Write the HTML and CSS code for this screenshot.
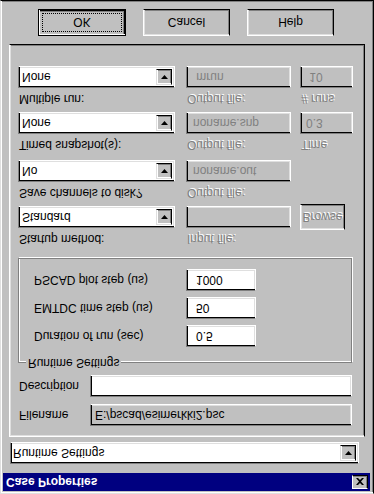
FILE: index.html
```html
<!DOCTYPE html>
<html lang="en">
<head>
    <meta charset="UTF-8">
    <meta name="viewport" content="width=device-width, initial-scale=1.0">
    <title>Case Properties</title>
    <link rel="stylesheet" href="styles.css">
</head>
<body>
    <div class="window">
        <div class="titlebar">
            <span class="title">Case Properties</span>
            <span class="close-btn">
                <svg width="8" height="7" viewBox="0 0 8 7"><path d="M0 0h2l2 2 2-2h2L5 3.5 8 7H6L4 5 2 7H0l3-3.5z" fill="#000"/></svg>
            </span>
        </div>

        <div class="combo tab-select">
            <span class="combo-text">Runtime Settings</span>
            <span class="arrow-btn"><svg width="7" height="4" viewBox="0 0 7 4"><path d="M0 0h7L3.5 4z" fill="#000"/></svg></span>
        </div>

        <div class="sheet">
            <div class="line-row">
                <span class="line-label">Filename</span>
                <div class="field readonly wide">E:/pscad/esimerkki2.psc</div>
            </div>
            <div class="line-row">
                <span class="line-label">Description</span>
                <div class="field wide"></div>
            </div>

            <fieldset class="group">
                <legend>Runtime Settings</legend>
                <div class="group-grid">
                    <span class="group-label">Duration of run (sec)</span>
                    <div class="field num">0.5</div>
                    <span class="group-label">EMTDC time step (us)</span>
                    <div class="field num">50</div>
                    <span class="group-label">PSCAD plot step (us)</span>
                    <div class="field num">1000</div>
                </div>
            </fieldset>

            <div class="opt-row first">
                <span class="lbl">Startup method:</span>
                <span class="lbl disabled">Input file:</span>
                <span></span>
                <div class="combo">
                    <span class="combo-text">Standard</span>
                    <span class="arrow-btn"><svg width="7" height="4" viewBox="0 0 7 4"><path d="M0 0h7L3.5 4z" fill="#000"/></svg></span>
                </div>
                <div class="field off"></div>
                <span class="btn browse">Browse</span>
            </div>

            <div class="opt-row">
                <span class="lbl">Save channels to disk?</span>
                <span class="lbl disabled">Output file:</span>
                <span></span>
                <div class="combo">
                    <span class="combo-text">No</span>
                    <span class="arrow-btn"><svg width="7" height="4" viewBox="0 0 7 4"><path d="M0 0h7L3.5 4z" fill="#000"/></svg></span>
                </div>
                <div class="field off">noname.out</div>
                <span></span>
            </div>

            <div class="opt-row wider">
                <span class="lbl">Timed snapshot(s):</span>
                <span class="lbl disabled">Output file:</span>
                <span class="lbl disabled">Time</span>
                <div class="combo">
                    <span class="combo-text">None</span>
                    <span class="arrow-btn"><svg width="7" height="4" viewBox="0 0 7 4"><path d="M0 0h7L3.5 4z" fill="#000"/></svg></span>
                </div>
                <div class="field off">noname.snp</div>
                <div class="field off small">0.3</div>
            </div>

            <div class="opt-row">
                <span class="lbl">Multiple run:</span>
                <span class="lbl disabled">Output file:</span>
                <span class="lbl disabled"># runs</span>
                <div class="combo">
                    <span class="combo-text">None</span>
                    <span class="arrow-btn"><svg width="7" height="4" viewBox="0 0 7 4"><path d="M0 0h7L3.5 4z" fill="#000"/></svg></span>
                </div>
                <div class="field off">&nbsp;mrun</div>
                <div class="field off small">&nbsp;10</div>
            </div>
        </div>

        <div class="buttons">
            <span class="btn default"><span class="focus">OK</span></span>
            <span class="btn">Cancel</span>
            <span class="btn">Help</span>
        </div>
    </div>
</body>
</html>
```

FILE: styles.css
```css
body {
    margin: 0;
    background-color: #c0c0c0;
    font-family: 'Liberation Sans', Arial, sans-serif;
    font-size: 12px;
    color: #000;
    overflow: hidden;
}

/* the whole capture is upside down */
.window {
    width: 374px;
    height: 494px;
    box-sizing: border-box;
    background-color: #c0c0c0;
    border: 1px solid;
    border-color: #dfdfdf #000 #000 #dfdfdf;
    box-shadow: inset 1px 1px #fff, inset -1px -1px #808080;
    padding: 2px 3px 2px 2px;
    display: flex;
    flex-direction: column;
    transform: scaleY(-1);
}

.titlebar {
    height: 18px;
    background-color: #000080;
    color: #fff;
    display: flex;
    align-items: center;
    justify-content: space-between;
    padding: 0 2px 0 3px;
    flex: none;
}

.title {
    font-weight: bold;
}

.close-btn {
    width: 16px;
    height: 14px;
    box-sizing: border-box;
    background-color: #c0c0c0;
    border: 1px solid;
    border-color: #fff #000 #000 #fff;
    box-shadow: inset -1px -1px #808080;
    display: flex;
    align-items: center;
    justify-content: center;
}

/* sunken edit box */
.field {
    box-sizing: border-box;
    height: 22px;
    border: 1px solid;
    border-color: #808080 #fff #fff #808080;
    box-shadow: inset 1px 1px #000, inset -1px -1px #dfdfdf;
    background-color: #fff;
    padding: 0 4px;
    display: flex;
    align-items: center;
    white-space: nowrap;
}

.field.readonly {
    background-color: #c0c0c0;
}

.field.off {
    background-color: #c0c0c0;
    color: #808080;
    padding-left: 6px;
}

.field.small {
    padding-left: 5px;
}

.combo {
    box-sizing: border-box;
    height: 22px;
    border: 1px solid;
    border-color: #808080 #fff #fff #808080;
    box-shadow: inset 1px 1px #000, inset -1px -1px #dfdfdf;
    background-color: #fff;
    padding: 2px;
    display: flex;
    align-items: stretch;
}

.combo-text {
    flex: 1;
    display: flex;
    align-items: center;
    padding-left: 1px;
}

.arrow-btn {
    width: 16px;
    box-sizing: border-box;
    background-color: #c0c0c0;
    border: 1px solid;
    border-color: #dfdfdf #000 #000 #dfdfdf;
    box-shadow: inset 1px 1px #fff, inset -1px -1px #808080;
    display: flex;
    align-items: center;
    justify-content: center;
}

.tab-select {
    margin: 9px 0 0 7px;
    width: 349px;
    flex: none;
}

.tab-select .combo-text {
    padding-left: 0;
}

/* raised tab body */
.sheet {
    margin: 5px 0 0 6px;
    width: 356px;
    height: 393px;
    box-sizing: border-box;
    border: 1px solid;
    border-color: #fff #000 #000 #fff;
    box-shadow: inset 1px 1px #dfdfdf, inset -1px -1px #808080;
    padding: 10px 0 0 8px;
    flex: none;
}

.line-row {
    display: grid;
    grid-template-columns: 72px 262px;
    align-items: center;
    margin-bottom: 7px;
}

.line-label {
    padding-left: 1px;
}

.group {
    margin: -2px 0 0 0;
    padding: 9px 0 10px 0;
    width: 334px;
    box-sizing: border-box;
    border: 1px solid #808080;
    box-shadow: 1px 1px #fff, inset 1px 1px #fff;
    min-width: 0;
}

.group legend {
    margin-left: 7px;
    padding: 0 2px;
    background-color: #c0c0c0;
    line-height: 14px;
}

.group-grid {
    display: grid;
    grid-template-columns: 152px 70px;
    row-gap: 6px;
    align-items: center;
    padding-left: 15px;
}

.field.num {
    padding-left: 9px;
}

.opt-row {
    display: grid;
    grid-template-columns: 168px 114px 53px;
    row-gap: 4px;
    margin-top: 6px;
}

.opt-row.first {
    margin-top: 12px;
}

.opt-row.wider {
    margin-top: 8px;
}

.opt-row .combo {
    width: 157px;
}

.opt-row .field.off {
    width: 105px;
}

.opt-row .field.small {
    width: 53px;
}

.lbl {
    line-height: 14px;
    white-space: nowrap;
    padding-left: 1px;
}

.disabled {
    color: #808080;
    text-shadow: 1px 1px 0 #fff;
}

.btn {
    box-sizing: border-box;
    background-color: #c0c0c0;
    border: 1px solid;
    border-color: #fff #000 #000 #fff;
    box-shadow: inset 1px 1px #dfdfdf, inset -1px -1px #808080;
    display: flex;
    align-items: center;
    justify-content: center;
}

.browse {
    width: 45px;
    height: 26px;
    margin: -2px 0;
    color: #808080;
    text-shadow: 1px 1px 0 #fff;
}

.buttons {
    display: flex;
    gap: 17px;
    margin: 8px 0 0 35px;
    flex: none;
}

.buttons .btn {
    width: 87px;
    height: 27px;
}

.buttons .btn.default {
    width: 88px;
    border: 1px solid #000;
    box-shadow: inset 1px 1px #fff, inset -1px -1px #000, inset -2px -2px #808080;
    padding: 3px;
    align-items: stretch;
}

.focus {
    flex: 1;
    border: 1px dotted #000;
    display: flex;
    align-items: center;
    justify-content: center;
}
```
